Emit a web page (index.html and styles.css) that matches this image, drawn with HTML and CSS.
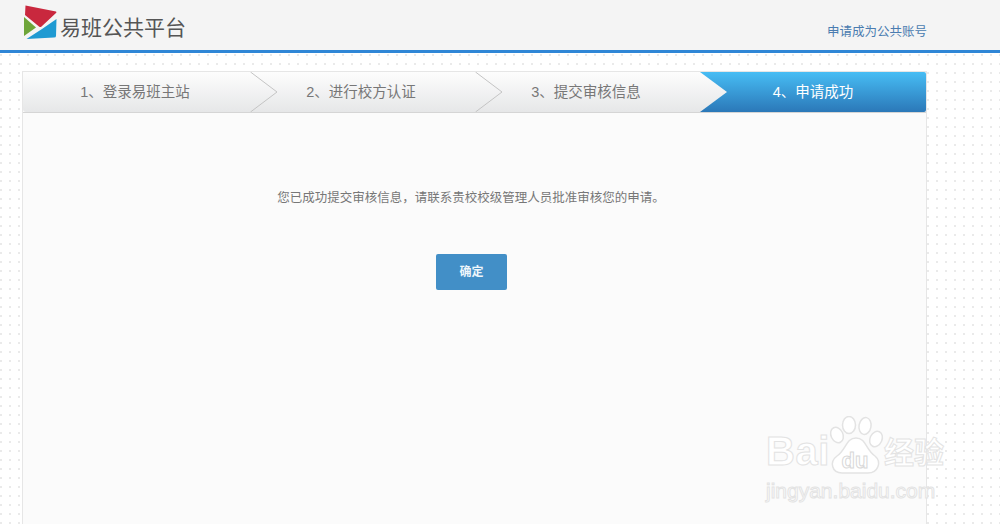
FILE: index.html
```html
<!DOCTYPE html>
<html lang="zh-CN">
<head>
    <meta charset="UTF-8">
    <title>易班公共平台</title>
    <link rel="stylesheet" href="styles.css">
</head>
<body>

    <!-- 顶部 -->
    <div class="header">
        <div class="brand">
            <svg class="logo" width="36" height="36" viewBox="0 0 36 36">
                <path d="M2.5 1.5 L33 7.5 Q34 8 33 9 L18.5 22.5 Q17.5 23.5 16 22.5 L2 11 Z" fill="#c9283e"/>
                <path d="M1 13 L13 23.5 L1 32 Z" fill="#6ea53a"/>
                <path d="M33.500 15 L33 32 Q33 33.500 31 33.500 L3.500 35 L19 25 Z" fill="#1f9ad2"/>
            </svg>
            <span class="brand-name">易班公共平台</span>
        </div>
        <a class="apply-link">申请成为公共账号</a>
    </div>

    <div class="panel">
        <!-- 步骤条 -->
        <div class="steps">
            <div class="step step-first">
                1、登录易班主站
                <svg class="arrow" width="28" height="40" viewBox="0 0 28 40"><polyline points="0.500,0 27,20 0.500,40" fill="none" stroke="#c4c4c4"/></svg>
            </div>
            <div class="step">
                2、进行校方认证
                <svg class="arrow" width="28" height="40" viewBox="0 0 28 40"><polyline points="0.500,0 27,20 0.500,40" fill="none" stroke="#c4c4c4"/></svg>
            </div>
            <div class="step">
                3、提交审核信息
                <svg class="arrow" width="28" height="40" viewBox="0 0 28 40">
                    <defs>
                        <linearGradient id="arrow-fill" x1="0" y1="0" x2="0" y2="1">
                            <stop offset="0" stop-color="#fdfdfd"/>
                            <stop offset="1" stop-color="#e6e7e8"/>
                        </linearGradient>
                    </defs>
                    <polygon points="0,0 27,20 0,40" fill="url(#arrow-fill)"/>
                </svg>
            </div>
            <div class="step step-active">4、申请成功</div>
        </div>

        <div class="result">
            <p class="result-text">您已成功提交审核信息，请联系贵校校级管理人员批准审核您的申请。</p>
            <a class="btn-ok">确定</a>
        </div>
    </div>

    <!-- 水印 -->
    <div class="watermark">
        <div class="wm-top">
            <span class="wm-bai">Bai</span>
            <svg class="wm-paw" width="56" height="60" viewBox="0 0 56 60">
                <g fill="#fff" stroke="#e3e3e3" stroke-width="1.500">
                    <ellipse cx="9" cy="19" rx="6" ry="8" transform="rotate(-25 9 19)"/>
                    <ellipse cx="21" cy="9" rx="6.500" ry="8.500"/>
                    <ellipse cx="37" cy="10" rx="6" ry="8.500" transform="rotate(10 37 10)"/>
                    <ellipse cx="48" cy="23" rx="6" ry="8" transform="rotate(25 48 23)"/>
                    <path d="M28 22 C38 22 38 34 47 40 C54 46 50 57 40 57 L14 57 C4 57 1 46 9 40 C18 34 18 22 28 22 Z"/>
                </g>
                <text x="27" y="52" class="wm-du">du</text>
            </svg>
            <span class="wm-cn">经验</span>
        </div>
        <div class="wm-url">jingyan.baidu.com</div>
    </div>

</body>
</html>
```

FILE: styles.css
```css
/* 基本样式 */
html, body {
    height: 100%;
}

body {
    margin: 0;
    height: 524px;
    overflow: hidden;
    position: relative;
    font-family: "Liberation Sans", "Noto Sans CJK SC", sans-serif;
    background-color: #fff;
    background-image: radial-gradient(circle at 1px 1px, #eaeaea 0.8px, transparent 1px);
    background-size: 9px 9px;
}

/* 顶部 */
.header {
    height: 50px;
    box-sizing: content-box;
    background-color: #f4f4f4;
    border-bottom: 3px solid #2f86d6;
    display: flex;
    justify-content: space-between;
    align-items: center;
    padding: 0 73px 0 23px;
}

.brand {
    display: flex;
    align-items: center;
    gap: 1px;
}

.logo {
    display: block;
    margin-top: -7px;
}

.brand-name {
    font-size: 21px;
    color: #555;
    margin-top: 2px;
}

.apply-link {
    font-size: 12.500px;
    color: #4a7cb0;
    margin-top: 10px;
}

/* 主体 */
.panel {
    width: 903px;
    height: 453px;
    margin: 18px 0 0 22px;
    border: 1px solid #e6e6e6;
    border-bottom: none;
    background-color: #fbfbfb;
}

.steps {
    display: flex;
    height: 40px;
    border-bottom: 1px solid #d5d5d5;
}

.step {
    position: relative;
    width: 225px;
    box-sizing: border-box;
    padding-right: 3px;
    line-height: 40px;
    text-align: center;
    font-size: 14.500px;
    color: #777;
    background: linear-gradient(#fdfdfd, #e6e7e8);
}

.step-first {
    width: 227px;
    border-radius: 3px 0 0 3px;
}

.step-active {
    width: 226px;
    padding-right: 0;
    color: #fff;
    background: linear-gradient(#47bdf4, #2b78b8);
    border-radius: 0 2px 2px 0;
}

.arrow {
    position: absolute;
    top: 0;
    left: 100%;
    z-index: 1;
    display: block;
}

/* 结果 */
.result {
    text-align: center;
    padding-top: 75px;
}

.result-text {
    margin: 0 0 46px 0;
    font-size: 12.500px;
    line-height: 20px;
    color: #777;
    padding-right: 7px;
}

.btn-ok {
    display: inline-block;
    width: 71px;
    height: 36px;
    line-height: 36px;
    margin-right: 6px;
    font-size: 12px;
    font-weight: bold;
    color: #eef6fb;
    background-color: #428fc7;
    border-radius: 2px;
}

/* 水印 */
.watermark {
    position: absolute;
    left: 766px;
    top: 416px;
    width: 182px;
    color: #fff;
}

.wm-top {
    display: flex;
    align-items: flex-end;
    height: 60px;
}

.wm-bai {
    font-size: 40px;
    font-weight: bold;
    line-height: 50px;
    letter-spacing: 0.500px;
    -webkit-text-stroke: 1px #e3e3e3;
    width: 62px;
}

.wm-paw {
    display: block;
    flex: none;
}

.wm-du {
    font-size: 22px;
    font-weight: bold;
    text-anchor: middle;
    fill: #fff;
    stroke: #d8d8d8;
    stroke-width: 1;
}

.wm-cn {
    font-size: 30px;
    line-height: 46px;
    font-weight: bold;
    -webkit-text-stroke: 1px #e3e3e3;
}

.wm-url {
    font-size: 21px;
    line-height: 24px;
    margin-top: 3px;
    -webkit-text-stroke: 1px #e3e3e3;
}
```
